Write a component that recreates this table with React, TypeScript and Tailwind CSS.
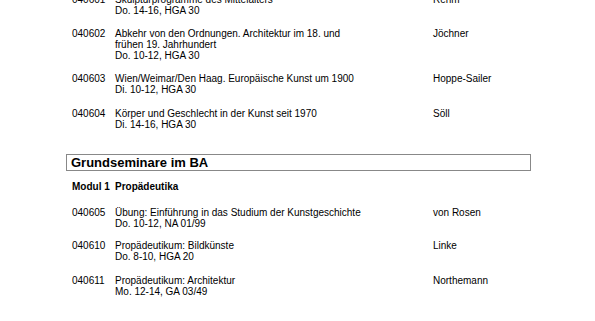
import React from "react";

type Course = {
  code: string;
  title: string[];
  time: string;
  lecturer: string;
  gap: string;
};

const lectures: Course[] = [
  { code: "040601", title: ["Skulpturprogramme des Mittelalters"], time: "Do. 14-16, HGA 30", lecturer: "Rehm", gap: "mt-0" },
  {
    code: "040602",
    title: ["Abkehr von den Ordnungen. Architektur im 18. und", "frühen 19. Jahrhundert"],
    time: "Do. 10-12, HGA 30",
    lecturer: "Jöchner",
    gap: "mt-[12px]",
  },
  { code: "040603", title: ["Wien/Weimar/Den Haag. Europäische Kunst um 1900"], time: "Di. 10-12, HGA 30", lecturer: "Hoppe-Sailer", gap: "mt-[12px]" },
  { code: "040604", title: ["Körper und Geschlecht in der Kunst seit 1970"], time: "Di. 14-16, HGA 30", lecturer: "Söll", gap: "mt-[13px]" },
];

const seminars: Course[] = [
  { code: "040605", title: ["Übung: Einführung in das Studium der Kunstgeschichte"], time: "Do. 10-12, NA 01/99", lecturer: "von Rosen", gap: "mt-[15px]" },
  { code: "040610", title: ["Propädeutikum: Bildkünste"], time: "Do. 8-10, HGA 20", lecturer: "Linke", gap: "mt-[11px]" },
  { code: "040611", title: ["Propädeutikum: Architektur"], time: "Mo. 12-14, GA 03/49", lecturer: "Northemann", gap: "mt-[13px]" },
];

function Row({ c }: { c: Course }) {
  return (
    <div className={`${c.gap} grid grid-cols-[43px_318px_auto] pl-[6px]`}>
      <div>{c.code}</div>
      <div>
        {c.title.map((t) => (
          <div key={t}>{t}</div>
        ))}
        <div>{c.time}</div>
      </div>
      <div>{c.lecturer}</div>
    </div>
  );
}

export default function App() {
  return (
    <div className="h-[321px] w-[595px] overflow-hidden bg-white">
      <div
        className="mt-[-6px] flex flex-col pl-[66px] text-[10px] leading-[11px] text-black"
        style={{ fontFamily: '"Liberation Sans", Arial, sans-serif' }}
      >
        {lectures.map((c) => (
          <Row key={c.code} c={c} />
        ))}

        <div className="mt-[24px] flex h-[17px] w-[465px] items-center border border-[#888888] pl-[4px] text-[13px] font-bold leading-[15px]">
          Grundseminare im BA
        </div>

        <div className="mt-[10px] grid grid-cols-[43px_auto] pl-[6px] font-bold">
          <div>Modul 1</div>
          <div>Propädeutika</div>
        </div>

        {seminars.map((c) => (
          <Row key={c.code} c={c} />
        ))}
      </div>
    </div>
  );
}
